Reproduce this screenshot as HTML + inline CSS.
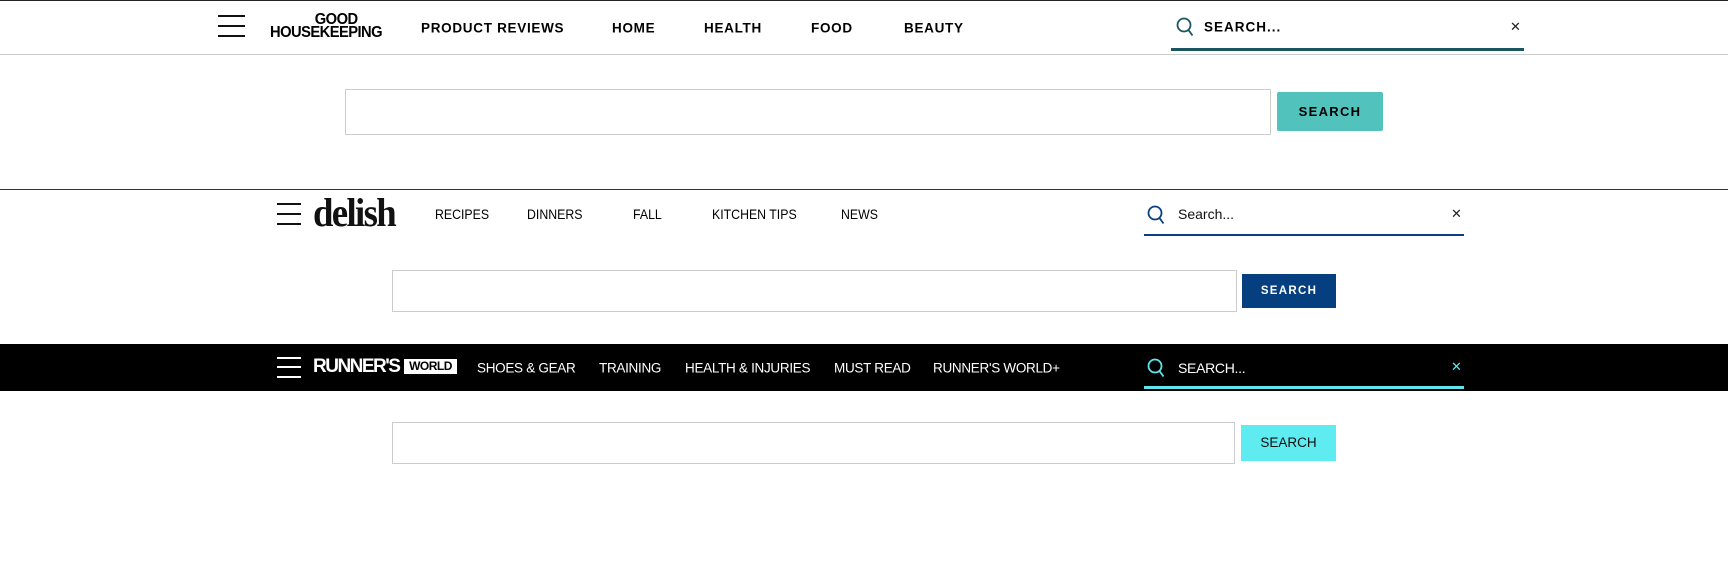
<!DOCTYPE html>
<html><head><meta charset="utf-8"><style>
*{margin:0;padding:0;box-sizing:border-box}
body{width:1728px;height:587px;background:#fff;position:relative;overflow:hidden;font-family:"Liberation Sans",sans-serif}
.a{position:absolute}
.ham span{position:absolute;left:0;height:2px;width:100%;background:#111}
.nav{position:absolute;white-space:nowrap;transform:translateY(-50%)}
.dn{position:absolute;white-space:nowrap;transform:translateY(-50%) scaleX(0.88);transform-origin:left center;font-size:14px}
</style></head><body>
<div class="a" style="left:0;top:0;width:1728px;height:1px;background:#222"></div>
<div class="a ham" style="left:218px;top:15px;width:27px;height:22px"><span style="top:0"></span><span style="top:10px"></span><span style="top:20px"></span></div>
<div class="a" style="left:269px;top:13px;width:124px;text-align:center;font-weight:bold;font-size:16px;line-height:13px;letter-spacing:-0.6px;color:#000;transform:scaleX(0.92);transform-origin:left top"><div style="padding-left:22px">GOOD</div><div>HOUSEKEEPING</div></div>
<div class="nav" style="left:421px;top:28px;font-weight:bold;font-size:13.5px;letter-spacing:0.7px">PRODUCT REVIEWS</div>
<div class="nav" style="left:612px;top:28px;font-weight:bold;font-size:13.5px;letter-spacing:0.7px">HOME</div>
<div class="nav" style="left:704px;top:28px;font-weight:bold;font-size:13.5px;letter-spacing:0.7px">HEALTH</div>
<div class="nav" style="left:811px;top:28px;font-weight:bold;font-size:13.5px;letter-spacing:0.7px">FOOD</div>
<div class="nav" style="left:904px;top:28px;font-weight:bold;font-size:13.5px;letter-spacing:0.7px">BEAUTY</div>
<svg class="a" style="left:1176px;top:17px" width="18" height="20" viewBox="0 0 18 20"><circle cx="8" cy="8" r="6.5" fill="none" stroke="#1a5660" stroke-width="1.8"/><line x1="12.5" y1="13" x2="16.5" y2="18.5" stroke="#1a5660" stroke-width="1.8"/></svg>
<div class="nav" style="left:1204px;top:27px;font-weight:bold;font-size:13.5px;letter-spacing:1px">SEARCH...</div>
<div class="nav" style="left:1510px;top:27px;font-size:13px;color:#222">✕</div>
<div class="a" style="left:1171px;top:48px;width:353px;height:3px;background:#1a5660"></div>
<div class="a" style="left:0;top:54px;width:1728px;height:1px;background:#ccc"></div>
<div class="a" style="left:345px;top:89px;width:926px;height:46px;border:1px solid #ccc"></div>
<div class="a" style="left:1277px;top:92px;width:106px;height:39px;background:#52c3bc;border-radius:2px;font-weight:bold;font-size:13px;letter-spacing:1.3px;line-height:39px;text-align:center">SEARCH</div>
<div class="a" style="left:0;top:189px;width:1728px;height:1px;background:#333"></div>

<div class="a ham" style="left:277px;top:203px;width:24px;height:22px"><span style="top:0"></span><span style="top:10px"></span><span style="top:20px"></span></div>
<div class="a" style="left:313px;top:195px;font-family:'Liberation Serif',serif;font-weight:bold;font-size:40px;line-height:36px;letter-spacing:-1.8px;color:#111;transform:scaleX(0.92);transform-origin:left top">delish</div>
<div class="dn" style="left:435px;top:214px">RECIPES</div>
<div class="dn" style="left:527px;top:214px">DINNERS</div>
<div class="dn" style="left:633px;top:214px">FALL</div>
<div class="dn" style="left:712px;top:214px">KITCHEN TIPS</div>
<div class="dn" style="left:841px;top:214px">NEWS</div>
<svg class="a" style="left:1147px;top:205px" width="18" height="20" viewBox="0 0 18 20"><circle cx="8" cy="8" r="6.5" fill="none" stroke="#0a3f80" stroke-width="1.8"/><line x1="12.5" y1="13" x2="16.5" y2="18.5" stroke="#0a3f80" stroke-width="1.8"/></svg>
<div class="nav" style="left:1178px;top:214px;font-size:14px;color:#111">Search...</div>
<div class="nav" style="left:1451px;top:214px;font-size:13px;color:#222">✕</div>
<div class="a" style="left:1144px;top:234px;width:320px;height:2px;background:#0a3f80"></div>
<div class="a" style="left:392px;top:270px;width:845px;height:42px;border:1px solid #ccc"></div>
<div class="a" style="left:1242px;top:274px;width:94px;height:34px;background:#063f7f;color:#fff;font-weight:bold;font-size:11.5px;letter-spacing:1.3px;line-height:34px;text-align:center">SEARCH</div>

<div class="a" style="left:0;top:344px;width:1728px;height:47px;background:#000"></div>
<div class="a ham" style="left:277px;top:357px;width:24px;height:21px"><span style="top:0;background:#fff"></span><span style="top:9px;background:#fff"></span><span style="top:19px;background:#fff"></span></div>
<div class="nav" style="left:313px;top:367px;color:#fff;font-weight:bold;font-size:19px;letter-spacing:-1.5px">RUNNER'S</div>
<div class="a" style="left:404px;top:359px;width:53px;height:15px;background:#fff;color:#000;font-weight:bold;font-size:12px;line-height:15px;text-align:center;letter-spacing:-0.5px">WORLD</div>
<div class="nav" style="left:477px;top:368px;color:#fff;font-size:13.5px;letter-spacing:-0.3px">SHOES &amp; GEAR</div>
<div class="nav" style="left:599px;top:368px;color:#fff;font-size:13.5px;letter-spacing:-0.3px">TRAINING</div>
<div class="nav" style="left:685px;top:368px;color:#fff;font-size:13.5px;letter-spacing:-0.3px">HEALTH &amp; INJURIES</div>
<div class="nav" style="left:834px;top:368px;color:#fff;font-size:13.5px;letter-spacing:-0.3px">MUST READ</div>
<div class="nav" style="left:933px;top:368px;color:#fff;font-size:13.5px;letter-spacing:-0.3px">RUNNER'S WORLD+</div>
<svg class="a" style="left:1147px;top:358px" width="18" height="20" viewBox="0 0 18 20"><circle cx="8" cy="8" r="6.5" fill="none" stroke="#5de6ee" stroke-width="1.8"/><line x1="12.5" y1="13" x2="16.5" y2="18.5" stroke="#5de6ee" stroke-width="1.8"/></svg>
<div class="nav" style="left:1178px;top:368px;color:#fff;font-size:14px;letter-spacing:-0.3px">SEARCH...</div>
<div class="nav" style="left:1451px;top:367px;font-size:13px;color:#5de6ee">✕</div>
<div class="a" style="left:1144px;top:386px;width:320px;height:3px;background:#5de6ee"></div>
<div class="a" style="left:392px;top:422px;width:843px;height:42px;border:1px solid #ccc"></div>
<div class="a" style="left:1241px;top:425px;width:95px;height:36px;background:#5eecf0;color:#111;font-size:13.5px;line-height:36px;text-align:center">SEARCH</div>
</body></html>
